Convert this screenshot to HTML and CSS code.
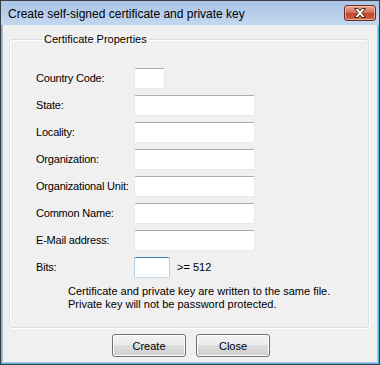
FILE: index.html
```html
<!DOCTYPE html>
<html>
<head>
<meta charset="utf-8">
<link rel="stylesheet" href="styles.css">
</head>
<body>
<div class="window">
  <div class="titlebar">
    <span class="title">Create self-signed certificate and private key</span>
    <div class="close-btn">
      <svg width="14" height="10" viewBox="0 0 14 10">
        <path d="M1.5 0.5 H5 L7 3 L9 0.5 H12.5 L8.8 5 L12.5 9.5 H9 L7 7 L5 9.5 H1.5 L5.2 5 Z" fill="#ffffff" stroke="#4a2a22" stroke-width="1" stroke-linejoin="round"/>
      </svg>
    </div>
  </div>
  <div class="client">
    <fieldset class="group">
      <legend class="group-title">Certificate Properties</legend>
      <div class="form">
        <label class="lbl">Country Code:</label><input class="field w-cc" type="text">
        <label class="lbl">State:</label><input class="field w-full" type="text">
        <label class="lbl">Locality:</label><input class="field w-full" type="text">
        <label class="lbl">Organization:</label><input class="field w-full" type="text">
        <label class="lbl">Organizational Unit:</label><input class="field w-full" type="text">
        <label class="lbl">Common Name:</label><input class="field w-full" type="text">
        <label class="lbl">E-Mail address:</label><input class="field w-full" type="text">
        <label class="lbl">Bits:</label>
        <div class="bits-row"><input class="field w-bits focused" type="text"><span class="hint">&gt;= 512</span></div>
      </div>
      <p class="note">Certificate and private key are written to the same file.<br>Private key will not be password protected.</p>
    </fieldset>
    <div class="buttons">
      <button class="btn">Create</button>
      <button class="btn">Close</button>
    </div>
  </div>
</div>
</body>
</html>
```
FILE: styles.css
```css
html, body {
  margin: 0;
  padding: 0;
}
body {
  width: 380px;
  height: 365px;
  overflow: hidden;
  font-family: "Liberation Sans", Arial, sans-serif;
  font-size: 11px;
  color: #000;
}
.window {
  box-sizing: border-box;
  width: 380px;
  height: 365px;
  border: 1px solid #3a3f46;
  background: #4fb8e6;
  display: flex;
  flex-direction: column;
}
.titlebar {
  height: 24px;
  flex: none;
  display: flex;
  align-items: flex-start;
  background: linear-gradient(#aac5e6, #c3d7ef);
  box-sizing: border-box;
  padding: 0 3px 0 7px;
}
.title {
  font-size: 12px;
  line-height: 14px;
  padding-top: 6px;
  color: #000;
  white-space: nowrap;
}
.close-btn {
  margin-left: auto;
  margin-top: 4px;
  box-sizing: border-box;
  width: 32px;
  height: 16px;
  border: 1px solid #6d2c22;
  border-radius: 3px;
  background: linear-gradient(#e8a491 0%, #d6765f 45%, #c0462c 55%, #cf6a4f 100%);
  box-shadow: inset 0 0 0 1px rgba(255,220,210,0.55);
  display: flex;
  align-items: center;
  justify-content: center;
}
.close-btn svg { display: block; }
.client {
  flex: 1;
  margin: 0 1px 1px;
  border: 1px solid #b5c4d4;
  border-top: none;
  background: #f0f0f0;
  display: flex;
  flex-direction: column;
  padding: 8px 8px 0 6px;
}
.group {
  margin: 0;
  width: 360px;
  box-sizing: border-box;
  border: 1px solid #d5dfe5;
  border-radius: 3px;
  box-shadow: inset 1px 1px 0 #fff, 1px 1px 0 #fff;
  padding: 22px 8px 16px 26px;
}
.group-title {
  margin-left: 6px;
  padding: 0 2px;
  line-height: 13px;
  font-size: 11px;
  color: #000;
}
.form {
  display: grid;
  grid-template-columns: 98px auto;
  grid-auto-rows: 21px;
  row-gap: 6px;
  align-items: center;
  justify-items: start;
}
.lbl {
  line-height: 13px;
  letter-spacing: -0.2px;
  white-space: nowrap;
}
.field {
  box-sizing: border-box;
  height: 21px;
  margin: 0;
  padding: 0;
  background: #fff;
  border: 1px solid #e3e9ef;
  border-top-color: #abadb3;
  border-radius: 2px;
  outline: none;
  font: inherit;
}
.w-cc { width: 31px; }
.w-full { width: 121px; }
.w-bits { width: 36px; }
.focused {
  border-color: #c5daed;
  border-top-color: #3d7bad;
  border-left-color: #b5cfe7;
  border-right-color: #b5cfe7;
}
.bits-row {
  display: flex;
  align-items: center;
  gap: 7px;
}
.hint { line-height: 13px; }
.note {
  margin: 7px 0 0 32px;
  line-height: 13px;
}
.buttons {
  display: flex;
  justify-content: center;
  gap: 10px;
  margin-top: 6px;
  padding-left: 4px;
}
.btn {
  box-sizing: border-box;
  width: 74px;
  height: 23px;
  margin: 0;
  padding: 0;
  font: inherit;
  color: #000;
  border: 1px solid #707070;
  border-radius: 3px;
  background: linear-gradient(#f2f2f2 0%, #ebebeb 50%, #dddddd 50%, #cfcfcf 100%);
  box-shadow: inset 0 0 0 1px #fcfcfc;
}
```
